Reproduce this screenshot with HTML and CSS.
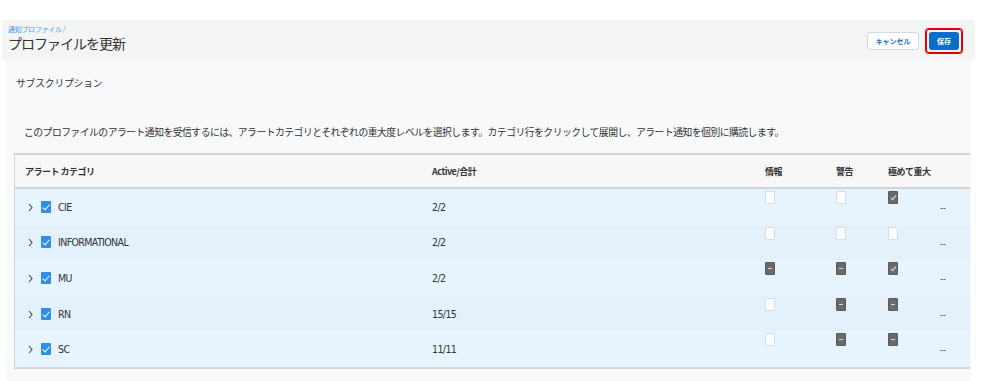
FILE: index.html
```html
<!DOCTYPE html>
<html>
<head>
  <title>プロファイルを更新</title>
  <meta charset="UTF-8">
  <link rel="stylesheet" href="styles.css">
</head>
<body>
  <div class="page">
    <div class="topbar">
      <div class="titles">
        <div class="crumb">通知プロファイル /</div>
        <h1>プロファイルを更新</h1>
      </div>
      <div class="actions">
        <button class="btn cancel">キャンセル</button>
        <span class="save-ring"><button class="btn save">保存</button></span>
      </div>
    </div>

    <div class="card">
      <h2>サブスクリプション</h2>
      <p class="desc">このプロファイルのアラート通知を受信するには、アラートカテゴリとそれぞれの重大度レベルを選択します。カテゴリ行をクリックして展開し、アラート通知を個別に購読します。</p>

      <div class="table">
        <div class="row head">
          <div class="cell cat">アラート カテゴリ</div>
          <div class="cell">Active/合計</div>
          <div class="cell">情報</div>
          <div class="cell">警告</div>
          <div class="cell">極めて重大</div>
          <div class="cell"></div>
        </div>

        <div class="row">
          <div class="cell cat"><svg class="chev" viewBox="0 0 5 9"><path d="M1 1l3 3.5L1 8" /></svg><span class="cb on"></span><span class="name">CIE</span></div>
          <div class="cell num">2/2</div>
          <div class="cell sev"><span class="box"></span></div>
          <div class="cell sev"><span class="box"></span></div>
          <div class="cell sev"><span class="box dark check"></span></div>
          <div class="cell dash">--</div>
        </div>

        <div class="row alt">
          <div class="cell cat"><svg class="chev" viewBox="0 0 5 9"><path d="M1 1l3 3.5L1 8" /></svg><span class="cb on"></span><span class="name">INFORMATIONAL</span></div>
          <div class="cell num">2/2</div>
          <div class="cell sev"><span class="box"></span></div>
          <div class="cell sev"><span class="box"></span></div>
          <div class="cell sev"><span class="box"></span></div>
          <div class="cell dash">--</div>
        </div>

        <div class="row">
          <div class="cell cat"><svg class="chev" viewBox="0 0 5 9"><path d="M1 1l3 3.5L1 8" /></svg><span class="cb on"></span><span class="name">MU</span></div>
          <div class="cell num">2/2</div>
          <div class="cell sev"><span class="box dark minus"></span></div>
          <div class="cell sev"><span class="box dark minus"></span></div>
          <div class="cell sev"><span class="box dark check"></span></div>
          <div class="cell dash">--</div>
        </div>

        <div class="row alt">
          <div class="cell cat"><svg class="chev" viewBox="0 0 5 9"><path d="M1 1l3 3.5L1 8" /></svg><span class="cb on"></span><span class="name">RN</span></div>
          <div class="cell num">15/15</div>
          <div class="cell sev"><span class="box"></span></div>
          <div class="cell sev"><span class="box dark minus"></span></div>
          <div class="cell sev"><span class="box dark minus"></span></div>
          <div class="cell dash">--</div>
        </div>

        <div class="row">
          <div class="cell cat"><svg class="chev" viewBox="0 0 5 9"><path d="M1 1l3 3.5L1 8" /></svg><span class="cb on"></span><span class="name">SC</span></div>
          <div class="cell num">11/11</div>
          <div class="cell sev"><span class="box"></span></div>
          <div class="cell sev"><span class="box dark minus"></span></div>
          <div class="cell sev"><span class="box dark minus"></span></div>
          <div class="cell dash">--</div>
        </div>
      </div>
    </div>
  </div>
</body>
</html>
```

FILE: styles.css
```css
* {
  margin: 0;
  padding: 0;
  box-sizing: border-box;
}

body {
  font-family: "Noto Sans CJK JP", "Noto Sans", sans-serif;
  background: #ffffff;
  color: #333333;
  height: 381px;
  overflow: hidden;
}

.page {
  padding: 20px 19px 0 2px;
}

/* Header bar */
.topbar {
  height: 40px;
  background: #f3f4f4;
  display: flex;
  justify-content: space-between;
  align-items: flex-start;
  padding: 0 13px 0 6px;
}

.titles {
  padding-top: 5px;
}

.crumb {
  font-size: 7px;
  line-height: 9px;
  color: #4a9de6;
  letter-spacing: -0.3px;
}

.topbar h1 {
  font-size: 14px;
  font-weight: 400;
  line-height: 18px;
  color: #333333;
  letter-spacing: -1px;
}

.actions {
  display: flex;
  align-items: center;
  gap: 7px;
  padding-top: 9px;
}

.btn {
  font-family: inherit;
  font-size: 7px;
  font-weight: 700;
  height: 18px;
  border-radius: 3px;
  cursor: pointer;
}

.btn.cancel {
  width: 52px;
  background: #ffffff;
  color: #1f6fc5;
  border: 1px solid #d6d9dc;
}

.save-ring {
  display: block;
  padding: 2px;
  border: 1px solid #e00000;
  border-radius: 3px;
  box-shadow: 0 0 0 1px #e00000;
}

.btn.save {
  display: block;
  width: 30px;
  background: #0a6fcc;
  color: #ffffff;
  border: none;
}

/* Card */
.card {
  margin: 0 4px;
  background: #f8f9fa;
  padding: 17px 0 0 8px;
  height: 330px;
}

.card h2 {
  font-size: 9.8px;
  font-weight: 400;
  line-height: 12px;
  color: #333333;
  padding-left: 2px;
  letter-spacing: -0.2px;
}

.desc {
  font-size: 9.8px;
  line-height: 12px;
  color: #333333;
  margin: 37px 0 15px 10px;
  white-space: nowrap;
  letter-spacing: -0.5px;
}

/* Table */
.table {
  border-top: 2px solid #d3d5d7;
  border-left: 1px solid #d3d5d7;
  border-bottom: 2px solid #d3d5d7;
  width: 956px;
}

.row {
  display: grid;
  grid-template-columns: 417px 333px 71px 52px 52px 1fr;
  height: 35.6px;
  background: #e8f4fd;
}

.row.alt {
  background: #e4f1fb;
}

.row.head {
  height: 34px;
  background: #f7f7f7;
  border-bottom: 2px solid #d3d5d7;
  font-size: 9px;
  font-weight: 700;
  color: #222222;
}

.row.head .cell {
  font-size: 9px;
  letter-spacing: -0.5px;
}

.cell {
  display: flex;
  align-items: center;
  font-size: 9px;
  color: #333333;
}

.cell.cat {
  padding-left: 10px;
}

.chev {
  width: 5px;
  height: 9px;
  margin: 1px 8px 0 3px;
  fill: none;
  stroke: #444444;
  stroke-width: 1.1;
}

.name,
.num,
.dash {
  font-family: "Liberation Sans Narrow", "DejaVu Sans Condensed", "Liberation Sans", sans-serif;
  font-size: 10.5px;
  letter-spacing: -0.6px;
  color: #333333;
}

.name {
  margin-left: 7px;
}

.cb {
  display: inline-block;
  width: 10px;
  height: 12px;
  border-radius: 1px;
  position: relative;
}

.cb.on {
  background: #2d8fe8;
}

.cb.on::after {
  content: "";
  position: absolute;
  left: 3px;
  top: 2px;
  width: 3px;
  height: 6px;
  border: solid #ffffff;
  border-width: 0 1.5px 1.5px 0;
  transform: rotate(40deg);
}

.cell.sev {
  align-items: flex-start;
  padding-top: 2px;
}

.box {
  display: block;
  width: 10px;
  height: 13px;
  background: #fbfdff;
  border: 1px solid #d6dde5;
  border-radius: 1px;
  position: relative;
}

.box.dark {
  background: #6a6a6a;
  border-color: #5a5a5a;
}

.box.minus::after {
  content: "";
  position: absolute;
  left: 2px;
  top: 5px;
  width: 4px;
  height: 1px;
  background: #d8d8d8;
}

.box.check::after {
  content: "";
  position: absolute;
  left: 2.5px;
  top: 2px;
  width: 2px;
  height: 5px;
  border: solid #e0e0e0;
  border-width: 0 1px 1px 0;
  transform: rotate(40deg);
}

.cell.dash {
  align-items: flex-start;
  padding-top: 14px;
  font-size: 9px;
  letter-spacing: 0;
}
```
